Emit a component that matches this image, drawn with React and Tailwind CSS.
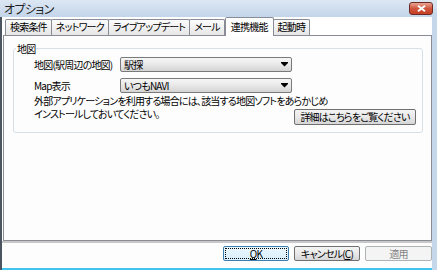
import React from "react";

const font = "font-['Noto_Sans_CJK_JP','Noto_Sans',sans-serif] [font-feature-settings:'palt'] text-[10px] leading-[12px] tracking-[-0.8px] text-[#000]";

function Arrow() {
  return (
    <svg width="7" height="5" viewBox="0 0 7 5" className="shrink-0">
      <rect x="0" y="0" width="7" height="1" fill="#000" />
      <path d="M0 1 H7 L3.5 4.5 Z" fill="#000" />
    </svg>
  );
}

function Select({ value }) {
  return (
    <div className="flex h-[15px] w-[172px] items-center justify-between rounded-[2px] border border-[#7a7a7a] bg-gradient-to-b from-[#f6f6f6] via-[#e8e8e8] to-[#d4d4d4] pl-[3px] pr-[3px]">
      <span className="leading-[12px]">{value}</span>
      <Arrow />
    </div>
  );
}

function Tab({ label, selected }) {
  if (selected) {
    return (
      <div className="relative z-10 mb-[-1px] flex h-[19px] items-start whitespace-nowrap rounded-t-[2px] border border-b-0 border-[#898c95] bg-white px-[5px] pt-[3px]">
        {label}
      </div>
    );
  }
  return (
    <div className="-ml-[1px] flex h-[16px] items-start whitespace-nowrap rounded-t-[2px] border border-b-0 border-[#898c95] bg-gradient-to-b from-[#fcfcfc] to-[#e6e6e6] px-[4px] pt-[1px] first:ml-0">
      {label}
    </div>
  );
}

export default function App() {
  return (
    <div className={`${font} relative flex h-[270px] w-[437px] flex-col overflow-hidden bg-[#c5d7ea]`}>
      {/* title bar */}
      <div className="flex h-[17px] shrink-0 items-center justify-between bg-gradient-to-b from-[#dce7f3] to-[#c3d5e9] pl-[4px] pr-[4px]">
        <span className="text-[12px] leading-[13px] tracking-[-0.6px] text-[#1e1e1e]">オプション</span>
        <div className="flex h-[13px] w-[24px] items-center justify-center rounded-[3px] border border-[#6d2a22] bg-gradient-to-b from-[#e8a493] via-[#d0553d] to-[#c53f23]">
          <svg width="9" height="7" viewBox="0 0 9 7">
            <path d="M1 0.8 L8 6.2 M8 0.8 L1 6.2" stroke="#fff" strokeWidth="2" />
          </svg>
        </div>
      </div>

      {/* client */}
      <div className="mr-[5px] flex flex-1 flex-col border-l-[2px] border-l-[#4b5560] bg-white">
        {/* tabs */}
        <div className="flex h-[18px] shrink-0 items-end pl-[3px] pr-[2px]">
          <div className="flex items-end">
            <Tab label="検索条件" />
            <Tab label="ネットワーク" />
            <Tab label="ライブアップデート" />
            <Tab label="メール" />
            <Tab label="連携機能" selected />
            <Tab label="起動時" />
          </div>
        </div>

        {/* panel */}
        <div className="ml-[1px] h-[206px] shrink-0 border border-[#898c95] bg-[#fdfdfd] pl-[9px] pr-[8px] pt-[7px]">
          <fieldset className="h-[90px] rounded-[3px] border border-[#d5dfe5] px-0">
            <legend className="ml-[2px] px-[1px] leading-[11px]">地図</legend>
            <div className="flex flex-col pl-[20px]">
              <div className="mt-[3px] flex items-center">
                <span className="w-[86px] whitespace-nowrap">地図(駅周辺の地図)</span>
                <Select value="駅探" />
              </div>
              <div className="mt-[6px] flex items-center">
                <span className="w-[86px] whitespace-nowrap">Map表示</span>
                <Select value="いつもNAVI" />
              </div>
              <div className="mt-[1px] whitespace-nowrap leading-[13px]">外部アプリケーションを利用する場合には、該当する地図ソフトをあらかじめ</div>
              <div className="flex items-start justify-between pr-[6px]">
                <span className="whitespace-nowrap leading-[13px]">インストールしておいてください。</span>
                <div className="mt-[2px] flex h-[16px] w-[122px] items-center justify-center whitespace-nowrap rounded-[2px] border border-[#707070] bg-gradient-to-b from-[#f4f4f4] via-[#e9e9e9] to-[#d6d6d6]">
                  詳細はこちらをご覧ください
                </div>
              </div>
            </div>
          </fieldset>
        </div>

        {/* bottom */}
        <div className="flex flex-1 flex-col border-t-[2px] border-t-[#c8c8c8] bg-[#fdfdfd]">
          <div className="mt-[3px] flex justify-end gap-[5px]">
            <div className="flex h-[15px] w-[66px] items-center justify-center rounded-[2px] border border-[#3c7fb1] bg-gradient-to-b from-[#eaf6fd] to-[#d9f0fc] p-[1px]">
              <div className="flex h-full w-full items-center justify-center border border-dotted border-[#000]">
                <span><span className="underline">O</span>K</span>
              </div>
            </div>
            <div className="flex h-[15px] w-[66px] items-center justify-center whitespace-nowrap rounded-[2px] border border-[#707070] bg-gradient-to-b from-[#f4f4f4] via-[#e9e9e9] to-[#d6d6d6]">
              キャンセル(<span className="underline">C</span>)
            </div>
            <div className="flex h-[15px] w-[67px] items-center justify-center rounded-[2px] border border-[#adb2b5] bg-[#f4f4f4] text-[#838383]">
              適用
            </div>
          </div>
        </div>
        <div className="h-[2px] shrink-0 bg-[#3fc4ef]"></div>
      </div>
    </div>
  );
}
